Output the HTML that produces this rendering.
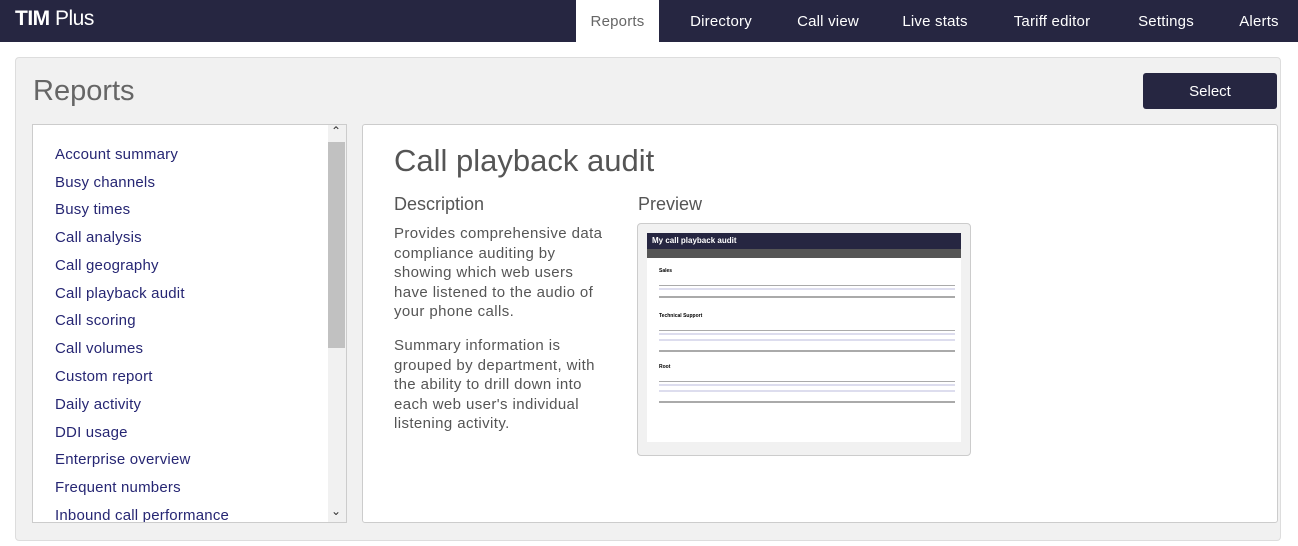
<!DOCTYPE html>
<html><head><style>
*{margin:0;padding:0;box-sizing:border-box}
body{width:1298px;height:546px;background:#fff;font-family:"Liberation Sans",sans-serif;position:relative;overflow:hidden}
.nav{position:absolute;left:0;top:0;width:1298px;height:42px;background:#262641}
.logo{position:absolute;left:15px;top:7px;color:#fff;font-size:21px;letter-spacing:-0.5px}
.nav a{position:absolute;top:1px;height:42px;line-height:42px;color:#fff;font-size:15px;text-align:center;letter-spacing:0.2px}
.panel{position:absolute;left:15px;top:57px;width:1266px;height:484px;background:#f1f1f1;border:1px solid #ddd;border-radius:4px}
h1{position:absolute;left:33px;top:75px;font-weight:normal;font-size:29px;color:#666}
.btn{position:absolute;left:1143px;top:73px;width:134px;height:36px;background:#262641;border-radius:3px;color:#fff;font-size:15px;text-align:center;line-height:38px}
.list{position:absolute;left:32px;top:124px;width:315px;height:399px;background:#fff;border:1px solid #ccc;overflow:hidden}
.list div{position:absolute;left:22px;color:#262673;font-size:15px;letter-spacing:0.2px}
.sel{position:absolute;left:48px;top:279px;width:265px;height:26px;background:#ececec;border:1px solid #888}
.sb{position:absolute;left:328px;top:125px;width:18px;height:397px;background:#f1f1f1}
.thumb{position:absolute;left:328px;top:142px;width:17px;height:206px;background:#c1c1c1}
.content{position:absolute;left:362px;top:124px;width:916px;height:399px;background:#fff;border:1px solid #ccc;border-radius:3px}
.t{position:absolute;color:#555}
.d{letter-spacing:0.4px;width:215px;font-size:15px;line-height:19.5px}
.frame{position:absolute;left:637px;top:223px;width:334px;height:233px;background:#f1f1f1;border:1px solid #ccc;border-radius:4px}
.inner{position:absolute;left:647px;top:233px;width:314px;height:209px;background:#fff}
.ln{position:absolute;height:1px;background:#aaa}
.tx{position:absolute;height:2px;background:#ccc}
</style></head><body>
<div class="nav">
<div class="logo"><b>TIM</b> Plus</div>
<a style="left:576px;width:83px;top:0;background:#fff;color:#666;line-height:43px">Reports</a>
<a style="left:672px;width:98px">Directory</a>
<a style="left:780px;width:96px">Call view</a>
<a style="left:888px;width:94px">Live stats</a>
<a style="left:998px;width:108px">Tariff editor</a>
<a style="left:1122px;width:88px">Settings</a>
<a style="left:1225px;width:68px">Alerts</a>
</div>
<div class="panel"></div>
<h1>Reports</h1>
<div class="btn">Select</div>
<div class="sel"></div>
<div class="list">
<div style="top:21px">Account summary</div>
<div style="top:49px">Busy channels</div>
<div style="top:76px">Busy times</div>
<div style="top:104px">Call analysis</div>
<div style="top:132px">Call geography</div>
<div style="top:160px">Call playback audit</div>
<div style="top:187px">Call scoring</div>
<div style="top:215px">Call volumes</div>
<div style="top:243px">Custom report</div>
<div style="top:271px">Daily activity</div>
<div style="top:299px">DDI usage</div>
<div style="top:326px">Enterprise overview</div>
<div style="top:354px">Frequent numbers</div>
<div style="top:382px">Inbound call performance</div>
</div>
<div class="sb"></div><div class="thumb"></div>
<div style="position:absolute;left:331px;top:124px;font-size:12px;color:#333">&#8963;</div>
<div style="position:absolute;left:331px;top:504px;font-size:12px;color:#333">&#8964;</div>
<div class="content"></div>
<div class="t" style="left:394px;top:143px;font-size:31px">Call playback audit</div>
<div class="t" style="left:394px;top:194px;font-size:18px">Description</div>
<div class="t" style="left:638px;top:194px;font-size:18px">Preview</div>
<div class="t d" style="left:394px;top:224px">Provides comprehensive data compliance auditing by showing which web users have listened to the audio of your phone calls.</div>
<div class="t d" style="left:394px;top:336px">Summary information is grouped by department, with the ability to drill down into each web user's individual listening activity.</div>
<div class="frame"></div>
<div class="inner">
<div style="position:absolute;left:0;top:0;width:314px;height:16px;background:#262641;color:#fff;font-size:8px;font-weight:bold;padding:3px 5px">My call playback audit</div>
<div style="position:absolute;left:0;top:16px;width:314px;height:9px;background:#555;"></div>
<div style="position:absolute;left:12px;top:35px;font-size:5px;font-weight:bold">Sales</div>
<div class="ln" style="left:12px;top:52px;width:296px"></div>
<div class="tx" style="left:12px;top:55px;width:296px;background:#dde"></div>
<div class="ln" style="left:12px;top:63px;width:296px;height:2px"></div>
<div style="position:absolute;left:12px;top:80px;font-size:5px;font-weight:bold">Technical Support</div>
<div class="ln" style="left:12px;top:97px;width:296px"></div>
<div class="tx" style="left:12px;top:100px;width:296px;background:#dde"></div>
<div class="tx" style="left:12px;top:106px;width:296px;background:#dde"></div>
<div class="ln" style="left:12px;top:117px;width:296px;height:2px"></div>
<div style="position:absolute;left:12px;top:131px;font-size:5px;font-weight:bold">Root</div>
<div class="ln" style="left:12px;top:148px;width:296px"></div>
<div class="tx" style="left:12px;top:151px;width:296px;background:#dde"></div>
<div class="tx" style="left:12px;top:157px;width:296px;background:#dde"></div>
<div class="ln" style="left:12px;top:168px;width:296px;height:2px"></div>
</div>
</body></html>
